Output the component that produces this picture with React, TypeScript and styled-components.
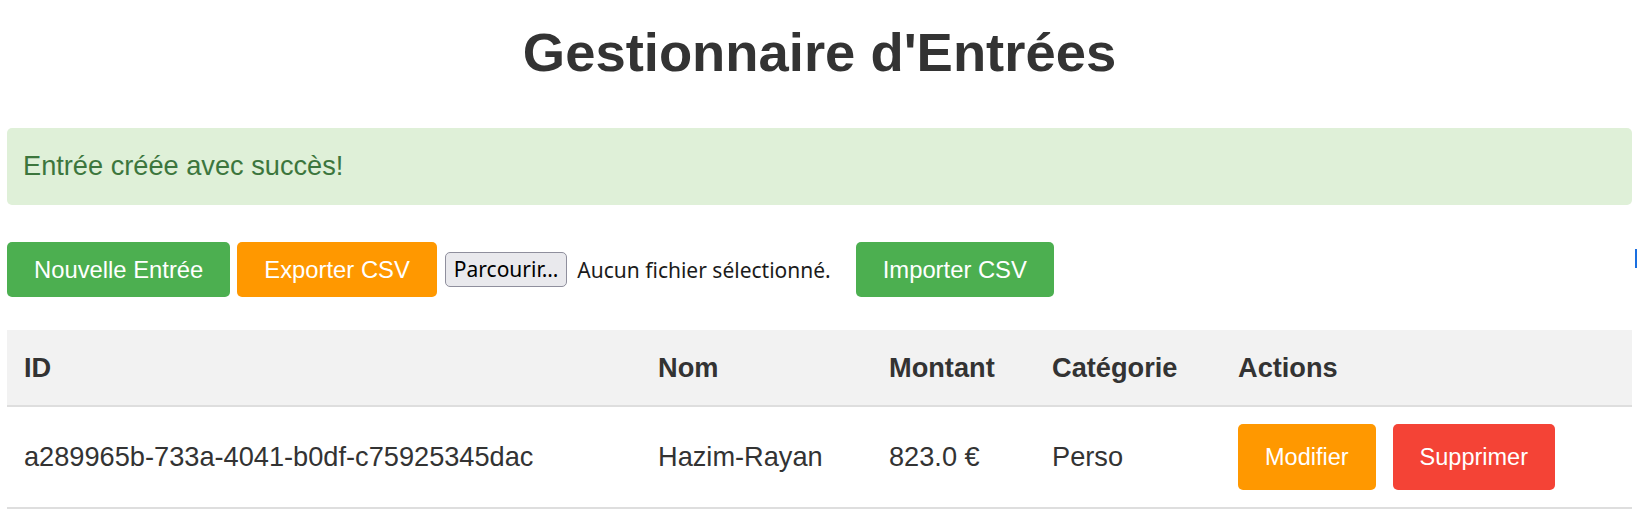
import React from "react";
import styled, { createGlobalStyle } from "styled-components";

const GlobalStyle = createGlobalStyle`
  html, body {
    margin: 0;
    padding: 0;
    background: #ffffff;
  }
  body {
    font-family: "Liberation Sans", Arial, sans-serif;
    color: #333333;
  }
`;

const Page = styled.div`
  padding: 21px 5px 0 7px;
`;

const Title = styled.h1`
  margin: 0 0 44px;
  text-align: center;
  font-size: 54.4px;
  font-weight: bold;
  line-height: normal;
  color: #333333;
`;

const Alert = styled.div`
  margin: 0 0 37px;
  padding: 22px 16px 23px;
  background: #dff0d8;
  color: #3c763d;
  font-size: 27.2px;
  line-height: normal;
  border-radius: 5px;
`;

const Toolbar = styled.div`
  display: flex;
  align-items: center;
  margin-bottom: 33px;
`;

const ActionButton = styled.button<{ $tone: "green" | "orange" | "red"; $gap?: number; $tall?: boolean }>`
  display: inline-block;
  margin-left: ${(p) => p.$gap ?? 0}px;
  padding: ${(p) => (p.$tall ? "19.5px 27px" : "13.5px 27px")};
  border: none;
  border-radius: 5px;
  font-family: "Liberation Sans", Arial, sans-serif;
  font-size: ${(p) => (p.$tall ? "23.5px" : "23.8px")};
  line-height: normal;
  color: #ffffff;
  cursor: pointer;
  background: ${(p) =>
    p.$tone === "green" ? "#4caf50" : p.$tone === "orange" ? "#ff9800" : "#f44336"};
`;

const FilePicker = styled.label`
  display: inline-flex;
  align-items: center;
  margin-left: 8px;
  font-family: "Noto Sans", "DejaVu Sans", sans-serif;
  font-size: 21px;
  color: #1b1b1b;
`;

const BrowseButton = styled.span`
  display: inline-flex;
  align-items: center;
  height: 35px;
  box-sizing: border-box;
  padding: 0 8px;
  border: 1.5px solid #8f8f9d;
  border-radius: 5px;
  background: #e9e9ed;
  color: #000000;
  line-height: 1;
`;

const FileName = styled.span`
  margin-left: 10px;
`;

const EdgeMark = styled.span`
  margin-left: auto;
  margin-right: -5px;
  width: 2px;
  height: 19px;
  background: #1a6fe0;
  align-self: flex-start;
  margin-top: 7px;
`;

const Table = styled.table`
  width: 100%;
  border-collapse: collapse;
  table-layout: fixed;
  font-size: 27.2px;
`;

const HeadCell = styled.th<{ $w?: number }>`
  width: ${(p) => (p.$w ? `${p.$w}px` : "auto")};
  padding: 21.5px 17px;
  background: #f2f2f2;
  text-align: left;
  font-weight: bold;
  line-height: normal;
  color: #333333;
  border-bottom: 2px solid #dedede;
`;

const Cell = styled.td`
  padding: 17px;
  line-height: normal;
  color: #333333;
  vertical-align: middle;
  border-bottom: 2px solid #dedede;
  white-space: nowrap;
`;

const RowActions = styled.div`
  display: flex;
  gap: 17px;
`;

type Entry = { id: string; nom: string; montant: string; categorie: string };

const entries: Entry[] = [
  {
    id: "a289965b-733a-4041-b0df-c75925345dac",
    nom: "Hazim-Rayan",
    montant: "823.0 €",
    categorie: "Perso",
  },
];

export default function App() {
  return (
    <>
      <GlobalStyle />
      <Page>
        <Title>Gestionnaire d'Entrées</Title>
        <Alert>Entrée créée avec succès!</Alert>
        <Toolbar>
          <ActionButton $tone="green">Nouvelle Entrée</ActionButton>
          <ActionButton $tone="orange" $gap={7}>
            Exporter CSV
          </ActionButton>
          <FilePicker>
            <BrowseButton>Parcourir…</BrowseButton>
            <FileName>Aucun fichier sélectionné.</FileName>
          </FilePicker>
          <ActionButton $tone="green" $gap={25}>
            Importer CSV
          </ActionButton>
          <EdgeMark />
        </Toolbar>
        <Table>
          <thead>
            <tr>
              <HeadCell $w={600}>ID</HeadCell>
              <HeadCell $w={197}>Nom</HeadCell>
              <HeadCell $w={129}>Montant</HeadCell>
              <HeadCell $w={152}>Catégorie</HeadCell>
              <HeadCell>Actions</HeadCell>
            </tr>
          </thead>
          <tbody>
            {entries.map((e) => (
              <tr key={e.id}>
                <Cell>{e.id}</Cell>
                <Cell>{e.nom}</Cell>
                <Cell>{e.montant}</Cell>
                <Cell>{e.categorie}</Cell>
                <Cell>
                  <RowActions>
                    <ActionButton $tone="orange" $tall>
                      Modifier
                    </ActionButton>
                    <ActionButton $tone="red" $tall>
                      Supprimer
                    </ActionButton>
                  </RowActions>
                </Cell>
              </tr>
            ))}
          </tbody>
        </Table>
      </Page>
    </>
  );
}
